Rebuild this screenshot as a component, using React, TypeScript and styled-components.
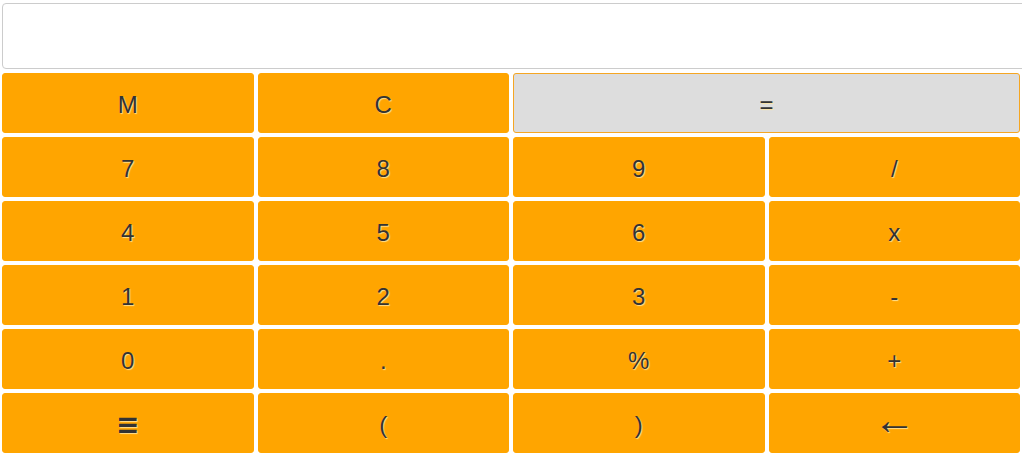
import styled, { createGlobalStyle } from "styled-components";

const GlobalStyle = createGlobalStyle`
  html, body {
    margin: 0;
    padding: 0;
    overflow: hidden;
    background: #fff;
  }
  body {
    font-family: "Liberation Sans", Arial, sans-serif;
  }
`;

const Calculator = styled.div`
  display: flex;
  flex-direction: column;
  gap: 4px;
  padding: 3px 0 0 2px;
  width: 1018px;
`;

const Display = styled.input`
  box-sizing: border-box;
  width: 1040px;
  height: 66px;
  border: 1px solid #ccc;
  border-radius: 4px;
  background: #fff;
  font-family: "Liberation Sans", Arial, sans-serif;
  font-size: 24px;
  padding: 0 10px;
  outline: none;
`;

const Keys = styled.div`
  display: grid;
  grid-template-columns: repeat(4, 1fr);
  grid-auto-rows: 60px;
  column-gap: 4px;
  row-gap: 4px;
`;

const glyphFont = {
  menu: `font-family: "DejaVu Sans", sans-serif; font-size: 28px; font-weight: bold;`,
  arrow: `font-size: 42px; line-height: 1; padding: 0 0 7px;`,
};

const Key = styled.button<{ $wide?: boolean; $muted?: boolean; $glyph?: "menu" | "arrow" }>`
  grid-column: ${(p) => (p.$wide ? "span 2" : "span 1")};
  box-sizing: border-box;
  border: 1px solid ${(p) => (p.$muted ? "#f5a623" : "orange")};
  border-radius: 3px;
  background: ${(p) => (p.$muted ? "#ddd" : "orange")};
  color: #333;
  font-family: "Liberation Sans", Arial, sans-serif;
  font-size: 24px;
  text-shadow: 1px 1px 1px rgba(255, 230, 160, 0.9);
  padding: 3px 0 0;
  cursor: pointer;
  ${(p) => (p.$glyph ? glyphFont[p.$glyph] : "")}
`;

const rows: string[][] = [
  ["7", "8", "9", "/"],
  ["4", "5", "6", "x"],
  ["1", "2", "3", "-"],
  ["0", ".", "%", "+"],
  ["≡", "(", ")", "←"],
];

const glyphOf = (k: string) => (k === "≡" ? "menu" : k === "←" ? "arrow" : undefined);

function App() {
  return (
    <>
      <GlobalStyle />
      <Calculator>
        <Display readOnly />
        <Keys>
          <Key>M</Key>
          <Key>C</Key>
          <Key $wide $muted>
            =
          </Key>
          {rows.flat().map((k) => (
            <Key key={k} $glyph={glyphOf(k)}>
              {k}
            </Key>
          ))}
        </Keys>
      </Calculator>
    </>
  );
}

export default App;
